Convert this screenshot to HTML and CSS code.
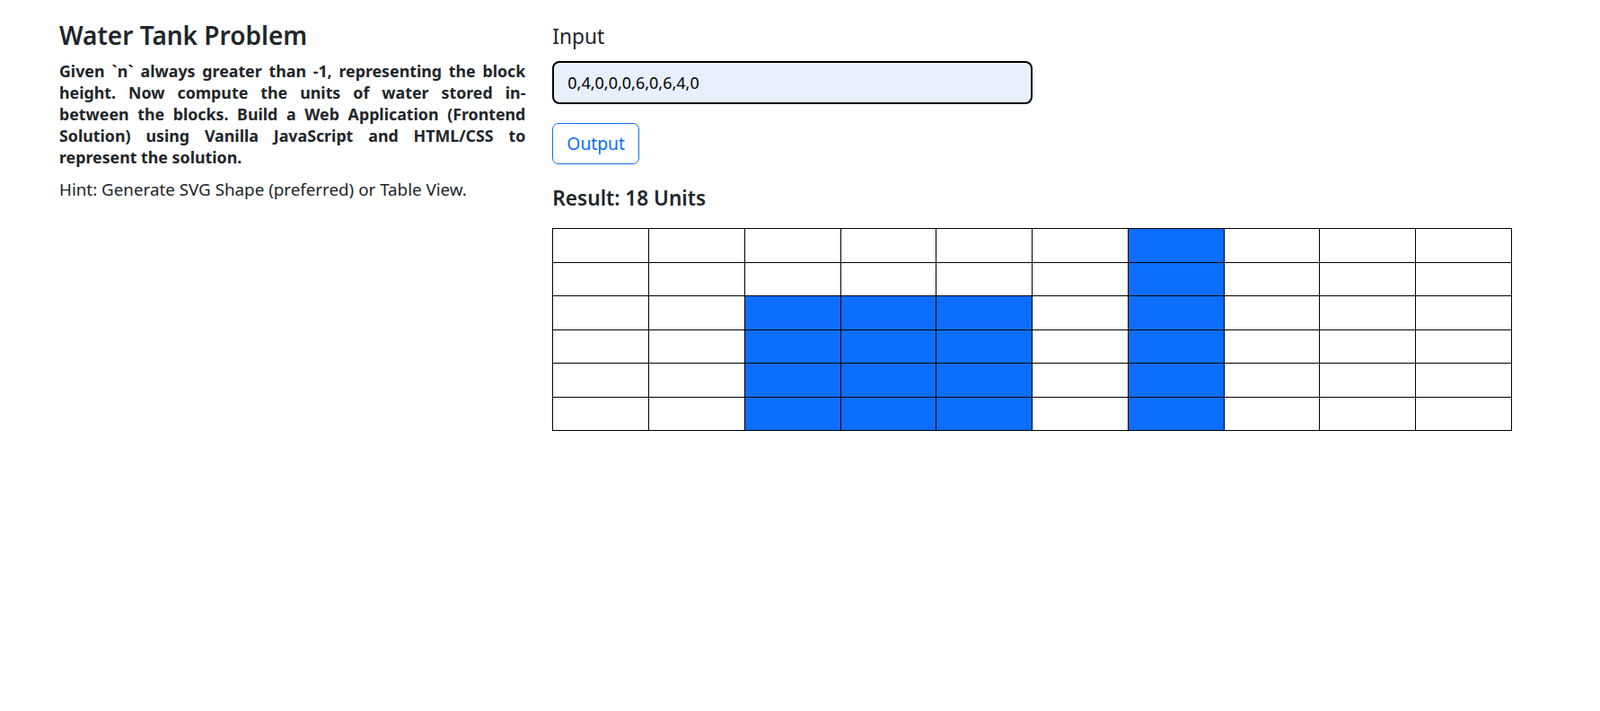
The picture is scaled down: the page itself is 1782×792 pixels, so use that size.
FILE: index.html
```html
<!DOCTYPE html>
<html lang="en">
<head>
<meta charset="utf-8">
<title>Water Tank Problem</title>
<link rel="stylesheet" href="styles.css">
</head>
<body>
<div class="container">
  <div class="row">
    <div class="col col-info">
      <h3 class="title">Water Tank Problem</h3>
      <p class="desc">
        <span class="ln">Given `n` always greater than -1, representing the block</span>
        <span class="ln">height. Now compute the units of water stored in-</span>
        <span class="ln">between the blocks. Build a Web Application (Frontend</span>
        <span class="ln">Solution) using Vanilla JavaScript and HTML/CSS to</span>
        <span class="ln-last">represent the solution.</span>
      </p>
      <p class="hint">Hint: Generate SVG Shape (preferred) or Table View.</p>
    </div>
    <div class="col col-main">
      <label class="input-label" for="blocks">Input</label>
      <input class="input-lg" id="blocks" type="text" value="0,4,0,0,0,6,0,6,4,0">
      <button class="btn-outline" type="button">Output</button>
      <h4 class="result">Result: 18 Units</h4>
      <table class="grid">
        <tbody>
          <tr><td></td><td></td><td></td><td></td><td></td><td></td><td class="w"></td><td></td><td></td><td></td></tr>
          <tr><td></td><td></td><td></td><td></td><td></td><td></td><td class="w"></td><td></td><td></td><td></td></tr>
          <tr><td></td><td></td><td class="w"></td><td class="w"></td><td class="w"></td><td></td><td class="w"></td><td></td><td></td><td></td></tr>
          <tr><td></td><td></td><td class="w"></td><td class="w"></td><td class="w"></td><td></td><td class="w"></td><td></td><td></td><td></td></tr>
          <tr><td></td><td></td><td class="w"></td><td class="w"></td><td class="w"></td><td></td><td class="w"></td><td></td><td></td><td></td></tr>
          <tr><td></td><td></td><td class="w"></td><td class="w"></td><td class="w"></td><td></td><td class="w"></td><td></td><td></td><td></td></tr>
        </tbody>
      </table>
    </div>
  </div>
</div>
</body>
</html>
```

FILE: styles.css
```css
* { box-sizing: border-box; }

html, body {
  margin: 0;
  background: #fff;
}

body {
  font-family: "Noto Sans", "Open Sans", sans-serif;
  font-size: 16px;
  line-height: 1.5;
  color: #212529;
}

.container {
  padding: 23px 83px 0 51px;
}

.row {
  display: grid;
  grid-template-columns: 1fr 2fr;
}

.col {
  padding: 0 15px;
  min-width: 0;
}

.title {
  margin: 0 0 10px;
  font-size: 28px;
  font-weight: 600;
  line-height: 1.2;
}

.desc {
  margin: 0 0 12px;
  font-size: 17.8px;
  font-weight: 700;
  line-height: 24px;
  text-align: justify;
}

.desc .ln {
  display: block;
  text-align-last: justify;
  white-space: nowrap;
}

.desc .ln-last {
  display: block;
}

.hint {
  margin: 0;
  font-size: 18.8px;
  line-height: 24px;
}

.input-label {
  display: block;
  margin: 4px 0 14px;
  font-size: 22.7px;
  line-height: 1.2;
}

.input-lg {
  display: block;
  width: 50%;
  height: 48px;
  padding: 8px 15px;
  font-family: inherit;
  font-size: 18px;
  line-height: 1.5;
  color: #000;
  background: #e8f0fe;
  border: 2px solid #000;
  border-radius: 8px;
  outline: none;
}

.btn-outline {
  display: block;
  margin-top: 21px;
  height: 46px;
  padding: 0 15px;
  font-family: inherit;
  font-size: 19.3px;
  line-height: 1.5;
  color: #0d6efd;
  background: #fff;
  border: 1px solid #0d6efd;
  border-radius: 7px;
}

.result {
  margin: 23.5px 0 20.5px;
  font-size: 22.6px;
  font-weight: 600;
  line-height: 1.2;
}

.grid {
  width: 100%;
  border-collapse: collapse;
  table-layout: fixed;
}

.grid td {
  height: 37.45px;
  padding: 0;
  border: 1px solid #000;
}

.grid td.w {
  background: #0d6efd;
}
```
